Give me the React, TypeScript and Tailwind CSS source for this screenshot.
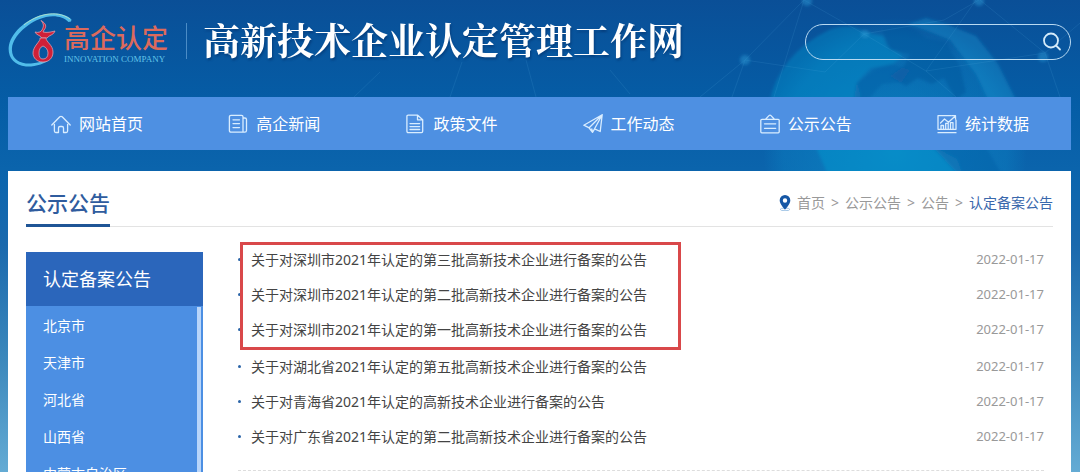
import type { ReactNode } from 'react';

const regions = ['北京市', '天津市', '河北省', '山西省', '内蒙古自治区', '辽宁省'];

const pinned = [
  { title: '关于对深圳市2021年认定的第三批高新技术企业进行备案的公告', date: '2022-01-17' },
  { title: '关于对深圳市2021年认定的第二批高新技术企业进行备案的公告', date: '2022-01-17' },
  { title: '关于对深圳市2021年认定的第一批高新技术企业进行备案的公告', date: '2022-01-17' },
];

const notices = [
  { title: '关于对湖北省2021年认定的第五批高新技术企业进行备案的公告', date: '2022-01-17' },
  { title: '关于对青海省2021年认定的高新技术企业进行备案的公告', date: '2022-01-17' },
  { title: '关于对广东省2021年认定的第二批高新技术企业进行备案的公告', date: '2022-01-17' },
];

function Icon({ children }: { children: ReactNode }) {
  return (
    <svg className="w-5 h-5 shrink-0" viewBox="0 0 20 20" fill="none" stroke="#d9edff" strokeWidth="1.3" strokeLinejoin="round" strokeLinecap="round" aria-hidden="true">
      {children}
    </svg>
  );
}

const nav = [
  {
    label: '网站首页',
    icon: <Icon><path d="M.8 11 8.8 2.800q1.200-1 2.400 0l8 8.200M3.400 10.300v6.700q0 1.500 1.400 1.500h2.700v-4.500q0-1.500 1.500-1.500h2q1.500 0 1.500 1.500v4.500h2.700q1.400 0 1.400-1.500v-6.700" /></Icon>,
  },
  {
    label: '高企新闻',
    icon: <Icon><path d="M3 1.300h10.500q1.500 0 1.500 1.500v15.400H3q-1.600 0-1.600-1.600V2.900Q1.400 1.300 3 1.300zM15 4h1.800q1.700 0 1.700 1.600v11q0 1.600-1.700 1.600H15M5 5.800h6.500M5 9.600h6.500M5 13.600h6.500" /></Icon>,
  },
  {
    label: '政策文件',
    icon: <Icon><path d="M3.200 1.200h9.500l5 4.500v11.600q0 1.300-1.300 1.300H3.200q-1.300 0-1.300-1.300V2.500q0-1.300 1.300-1.300zM12.500 1.400v4.400h5M5 9.600h9.600M5 12.600h9.600M5 15.500h9.600" /></Icon>,
  },
  {
    label: '工作动态',
    icon: <Icon><path d="M19.200.7.8 11.200l5.400 2.600L19.200.7l-2 16.800-5.600-2.700zM6.200 13.800v.2l3.300 4.300 2.100-3.500L19.200.7M9.500 18.300l-.7-3.300" /></Icon>,
  },
  {
    label: '公示公告',
    icon: <Icon><path d="M2 5.300h16.200q1 0 1 1v11.500q0 1-1 1H1.800q-1 0-1-1V6.300q0-1 1.200-1zM5.600 5.200 9 1.600q1-1 2 0l3.400 3.600M4.500 9.800h11.200M4.500 14.300h11.200" /></Icon>,
  },
  {
    label: '统计数据',
    icon: <Icon><path d="M14 1.700H1v13.600h18V6M1 18.700h18M3.500 9l4-4 4 3.200 6.800-6.300M15 1.700h3.500v3.200M4 15v-3.500h2.500V15M8.700 15V9.300h2.500V15M13.500 15V8.700H16V15" /></Icon>,
  },
];

function LogoMark() {
  return (
    <svg className="absolute left-0 top-0 w-[66px] h-[56px]" viewBox="0 0 66 56" fill="none" aria-hidden="true">
      <path d="M63 9.500 60.500 10C56 5 47 3 38 5 21 9 5 24 4 36 3 47 12 52 23 51.500 30 51 37 49 43 46.500 37 52 27 55 18 54.500 5 53 -1 44 1 33 4 19 21 5 38 2 49 .500 58 2 63.500 7.500Z" fill="#51bdea" />
      <path d="M62 7C55 2 46 1 38 2.500 30 4 22 8 16 13" stroke="#a8dccb" />
      <path d="M33 8.500c5 3 6 6 3 9.500l-1 2c4 1 8 0 12-1-1 4-6 4-8 7h-5c-2-3-6-3-7-6 3 1 6 0 7-2 2-4 2-6-1-9.500z" fill="#cf2038" stroke="#dc9dae" strokeWidth=".8" />
      <path fillRule="evenodd" d="M32 26c1 3-7 8-7 15 0 5 4 9 10 9s10-4 10-10c0-7-7-10-7-14zm3 8c-3 1-4 4-4 7 0 4 1 6 4 6s5-2 5-6c0-3-2-6-5-7z" fill="#cf2038" stroke="#dc9dae" strokeWidth=".8" />
    </svg>
  );
}

function Backdrop() {
  return (
    <svg className="absolute right-0 top-0 w-[1080px] h-[180px] pointer-events-none" viewBox="0 0 1080 180" fill="none" aria-hidden="true">
      <defs>
        <radialGradient id="globe" cx="50%" cy="50%" r="50%">
          <stop offset="0" stopColor="#0f96d0" stopOpacity=".6" />
          <stop offset=".85" stopColor="#0c86c6" stopOpacity=".35" />
          <stop offset="1" stopColor="#0c86c6" stopOpacity="0" />
        </radialGradient>
        <filter id="soft">
          <feGaussianBlur stdDeviation="1.5" />
        </filter>
      </defs>
      <circle cx="895" cy="150" r="132" fill="url(#globe)" />
      <g filter="url(#soft)">
        <path d="M769 104q10-50 60-74 20-8 36 2l18 4 4 10 16 10-10 8-22 4-14 14 4 14-6 8z" fill="#0d94cd" fillOpacity=".4" />
        <path d="M908 24l18-6 20 6 30 12 22 28 20 40h-28l-14-30-26-34-20-8z" fill="#1593cf" fillOpacity=".4" />
        <path d="M882 30l22-4 12 4 10 8 20 4 14 24 6 26-10 8-12-22-12 6-14-6-12 8-16-10 14-10 6-12-20-4z" fill="#0a559e" fillOpacity=".5" />
        <path d="M856 84l20-16 16-4 18 6-8 12-20 2-14 16h-14z" fill="#0a5fa6" fillOpacity=".45" />
        <path d="M815 145h116l26 14 6 16H828z" fill="#0e9ad0" fillOpacity=".45" />
        <path d="M931 145h54l16 28h-44z" fill="#0a5fa6" fillOpacity=".45" />
      </g>
      <g stroke="#5db4e2" strokeOpacity=".18" strokeWidth=".8">
        <path d="M804 0 745 60 700 97M804 0l60 34 80-14 35-20M745 60l80 12 39-38M745 60l-13 37M864 34l62 37 50-71M926 71l119-18 35-30M1045 53 980 0M1045 53l15 44M926 71l30 26M804 0l-30 97" />
        <path d="M462 62l-12 35M526 60l10 37M610 70l20 24M380 72l-26 25" />
      </g>
      <g fill="#2b9bd6" fillOpacity=".45" filter="url(#soft)">
        <circle cx="807" cy="1" r="5" />
        <circle cx="745" cy="60" r="5" />
        <circle cx="865" cy="34" r="4" />
        <circle cx="979" cy="1" r="5" />
        <circle cx="1043" cy="57" r="5" />
      </g>
    </svg>
  );
}

function Row({ title, date }: { title: string; date: string }) {
  return (
    <li className="flex items-center h-[35px]">
      <span className="w-[3px] h-[3px] rounded-full bg-[#2b65a8] mr-[10px]" />
      <a href="#" className="text-sm text-[#444]">{title}</a>
      <time dateTime={date} className="ml-auto text-[13px] text-[#999]">{date}</time>
    </li>
  );
}

export default function App() {
  return (
    <div className="relative h-screen overflow-hidden flex flex-col pl-2 pr-[9px] bg-[linear-gradient(to_bottom,#0a4f97_0%,#055da6_22%,#0c65ad_38%,#1a69ad_52%,#3c88bc_76%,#64abd4_100%)] font-['Noto_Sans','Noto_Sans_CJK_SC',sans-serif]">
      <Backdrop />
      <header className="relative flex h-[97px] shrink-0">
        <div className="relative w-[178px] h-[60px] mt-3 pl-14 pt-[10px]">
          <LogoMark />
          <p className="text-[26px] leading-[32px] font-medium text-[#dc6a5c]">高企认定</p>
          <p className="text-[9px] leading-[10px] whitespace-nowrap text-[#62c4e8] font-['Liberation_Serif',serif]">INNOVATION COMPANY</p>
        </div>
        <div className="w-px h-9 mt-[23px] bg-[#4b8cc6]" />
        <h1 className="ml-4 mt-4 text-[37px] leading-[46px] font-['Noto_Serif_CJK_SC','Noto_Sans_CJK_SC',serif] font-bold text-transparent bg-clip-text bg-linear-to-b from-white from-50% to-[#c9d3e2] whitespace-nowrap drop-shadow-[1px_2px_1px_rgba(0,30,80,0.4)]">
          高新技术企业认定管理工作网
        </h1>
        <form className="ml-auto mt-6 flex items-center w-[266px] h-9 px-2 rounded-full border border-[#b9daf2]">
          <input type="search" aria-label="搜索" className="flex-1 min-w-0 h-full bg-transparent text-sm text-white outline-none" />
          <button type="submit" aria-label="搜索">
            <svg className="w-5 h-5" viewBox="0 0 20 20" fill="none" stroke="#d4ebfa" strokeWidth="1.8" strokeLinecap="round" aria-hidden="true">
              <circle cx="9" cy="8.5" r="7" />
              <path d="m14 13.5 4 4" />
            </svg>
          </button>
        </form>
      </header>

      <nav className="relative flex h-[53px] shrink-0 bg-[#4e90e2]">
        {nav.map((item) => (
          <a key={item.label} href="#" className="flex-1 flex items-center justify-center gap-2 pl-px pt-px text-base text-white">
            {item.icon}
            {item.label}
          </a>
        ))}
      </nav>

      <main className="relative flex-1 min-h-0 mt-[21px] px-[18px] bg-white flex flex-col">
        <div className="flex justify-between shrink-0 h-14 border-b border-[#e3e3e3]">
          <h2 className="h-14 pt-4 text-[21px] leading-[32px] font-medium text-[#2f5c9e] border-b-3 border-[#1f5596]">公示公告</h2>
          <div className="flex items-center gap-[6px] pt-2 text-sm text-[#999]">
            <svg className="w-3 h-4" viewBox="0 0 12 16" aria-hidden="true">
              <ellipse cx="6" cy="14.4" rx="4.8" ry="1.3" fill="none" stroke="#8db8e0" strokeWidth=".8" />
              <path fillRule="evenodd" d="M6 0a5.3 5.3 0 0 0-5.3 5.4C.7 9 6 14.600 6 14.600S11.300 9 11.300 5.400A5.300 5.300 0 0 0 6 0zm0 3.300a2.200 2.200 0 1 1 0 4.400 2.200 2.200 0 0 1 0-4.400z" fill="#1657a5" />
            </svg>
            <a href="#">首页</a>
            <span>&gt;</span>
            <a href="#">公示公告</a>
            <span>&gt;</span>
            <a href="#">公告</a>
            <span>&gt;</span>
            <a href="#" className="text-[#3a68ac]">认定备案公告</a>
          </div>
        </div>

        <div className="flex flex-1 min-h-0 pt-[25px]">
          <aside className="flex flex-col w-[177px] shrink-0 bg-[#4c8fe3] text-white">
            <h3 className="h-[54px] shrink-0 pl-[17px] leading-[54px] text-lg bg-[#2b66bb]">认定备案公告</h3>
            <div className="flex flex-1 min-h-0 pt-px pr-[2px]">
              <ul className="flex-1 overflow-hidden">
                {regions.map((name) => (
                  <li key={name}>
                    <a href="#" className="block pl-[17px] leading-[37px] text-sm">{name}</a>
                  </li>
                ))}
              </ul>
              <div className="w-1 bg-[#b8d5fa]" />
            </div>
          </aside>

          <section className="flex-1 pl-[35px] pr-[9px]">
            <div className="relative -mt-[10px]">
              <ul>
                {pinned.map((n) => <Row key={n.title} {...n} />)}
              </ul>
              <div className="absolute left-[2px] top-0 w-[441px] h-[108px] border-3 border-[#d9484a] pointer-events-none" />
            </div>
            <ul className="mt-[2px] pb-4 border-b border-dashed border-[#ddd]">
              {notices.map((n) => <Row key={n.title} {...n} />)}
            </ul>
          </section>
        </div>
      </main>
    </div>
  );
}
